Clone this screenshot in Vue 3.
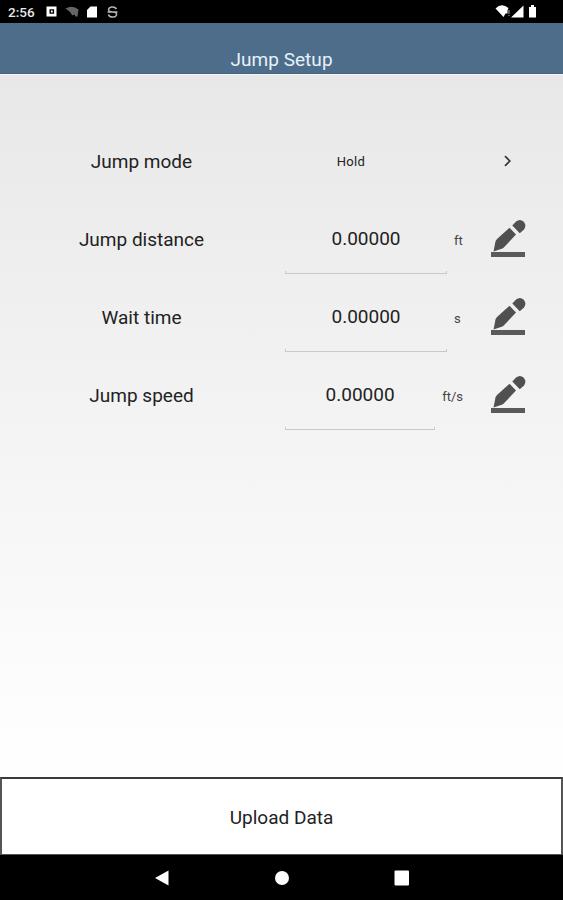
<script setup>
const fields = [
  { label: 'Jump distance', value: '0.00000', unit: 'ft' },
  { label: 'Wait time', value: '0.00000', unit: 's' },
  { label: 'Jump speed', value: '0.00000', unit: 'ft/s' },
]
</script>

<template>
  <div class="screen">
    <div class="status">
      <span class="clock">2:56</span>
      <svg class="status-left" width="74" height="16" viewBox="0 0 74 16">
        <path fill="#fff" fill-rule="evenodd" d="M.5 2.500h10v10H.5zM3.500 5.200v4.600h4.600V5.200zM4.900 6.600h1.800v1.800H4.900z" />
        <path fill="#666" d="M19.500 4.500q7-4 13 1l-1 7h-2l-1-2-2 1-3-4z" />
        <path fill="#fff" d="M44.500 2.500H51v11H41V6z" />
        <path fill="none" stroke="#b5b5b5" stroke-width="1.500" d="M70.500 5Q69 2.500 65.500 3q-4 1-2.500 4 1 1 4 1 4 0 3.500 3-1 2.500-4 2-3.500 0-4-2.500M61.500 8h10" />
      </svg>
      <svg class="status-right" width="44" height="16" viewBox="0 0 44 16">
        <path fill="#fff" d="M-1.500 4.500Q4.500-1.500 11.500 4l-1 2.500v3H8.500L6.500 13z" />
        <path fill="#aaa" d="M11.500 6h1v4h-1zM11.500 11h1v1h-1z" />
        <path fill="#fff" d="M26.500 1.500v12H14zM32 3h2V1h3v2h2v10.500h-7z" />
      </svg>
    </div>
    <header class="header"><h1>Jump Setup</h1></header>
    <main class="content">
      <div class="row">
        <div class="label">Jump mode</div>
        <div class="mode">Hold</div>
        <svg class="chevron" width="9" height="12" viewBox="0 0 9 12">
          <path d="M2 1.200 6.800 6 2 10.800" fill="none" stroke="#333" stroke-width="1.700" />
        </svg>
      </div>
      <div v-for="f in fields" :key="f.label" class="row">
        <div class="label">{{ f.label }}</div>
        <div class="entry">
          <div class="field">{{ f.value }}</div>
          <span class="unit">{{ f.unit }}</span>
        </div>
        <svg class="edit" width="36" height="40" viewBox="0 0 36 40">
          <path fill="#5a5a5a" d="M1 33h34v5H1z" />
          <path fill="#505050" d="M3.500 32.500 5.500 22.500Q6 21 7 20L19.500 8.800l6.500 6.700L14 28.300q-1 1-2.300 1.500z" />
          <path fill="#505050" d="M22.300 6.500 26 2.500q4-3 7.500 0 3.500 4 .5 8l-4.200 3.700z" />
        </svg>
      </div>
    </main>
    <button class="upload">Upload Data</button>
    <nav class="nav">
      <svg width="16" height="18" viewBox="0 0 16 18"><path d="M1 9 14.500 1.500v15z" fill="#fff" /></svg>
      <svg width="16" height="18" viewBox="0 0 16 18"><circle cx="8" cy="9" r="7" fill="#fff" /></svg>
      <svg width="16" height="18" viewBox="0 0 16 18"><rect x=".5" y="1.500" width="14.500" height="15" rx="1" fill="#fff" /></svg>
    </nav>
  </div>
</template>

<style>
body {
  margin: 0;
}
</style>

<style scoped>
.screen {
  display: flex;
  flex-direction: column;
  height: 900px;
  font-family: Roboto, sans-serif;
  color: #222;
}
.status {
  display: flex;
  box-sizing: border-box;
  height: 23px;
  padding: 4px 22px 0 8px;
  background: #000;
}
.clock {
  width: 38px;
  color: #e8e8e8;
  font-size: 13.500px;
  font-weight: 500;
  line-height: 16px;
}
.status-right {
  margin-left: auto;
  overflow: visible;
}
.header {
  box-sizing: border-box;
  height: 51px;
  padding-top: 25px;
  background: #4e6d8b;
  border-bottom: 1px solid #456482;
}
h1 {
  margin: 0;
  color: #e6f2fb;
  font-size: 19px;
  font-weight: 400;
  line-height: 23px;
  text-align: center;
  letter-spacing: 0.050px;
}
.content {
  flex: 1;
  padding-top: 47px;
  background: linear-gradient(#e8e8e8, #fefefe 95%);
  border-top: 1px solid #f2f7fa;
  box-sizing: border-box;
}
.row {
  display: flex;
  align-items: center;
  height: 78px;
}
.label {
  width: 283px;
  margin-right: 2px;
  font-size: 19px;
  text-align: center;
}
.mode {
  width: 132px;
  font-size: 13px;
  text-align: center;
  letter-spacing: 0.300px;
}
.chevron {
  margin-left: 86px;
}
.entry {
  display: flex;
  align-items: center;
  width: 178px;
  height: 100%;
}
.field {
  flex: 1;
  height: 70px;
  font-size: 19px;
  line-height: 70px;
  text-align: center;
  position: relative;
}
.field::after {
  content: '';
  position: absolute;
  right: 0;
  bottom: 0;
  left: 0;
  height: 2px;
  border: 1px solid #c9c9c9;
  border-top: 0;
}
.unit {
  min-width: 9px;
  padding: 3px 0 0 7px;
  color: #444;
  font-size: 13px;
  text-align: left;
}
.edit {
  margin-left: 27px;
}
.upload {
  height: 78px;
  margin: 0;
  padding: 1px 0 0;
  background: #fff;
  border: solid #555;
  border-width: 2px 2px 1px;
  border-top-color: #3a3a3a;
  color: #222;
  font: 400 19px Roboto, sans-serif;
}
.nav {
  display: flex;
  justify-content: center;
  align-items: center;
  gap: 104px;
  height: 45px;
  padding-top: 1px;
  box-sizing: border-box;
  background: #000;
}
</style>
